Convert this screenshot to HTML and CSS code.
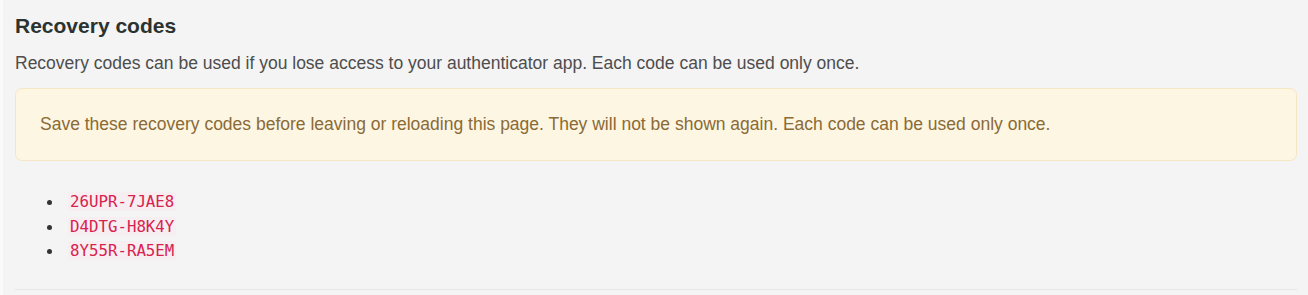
FILE: index.html
```html
<!DOCTYPE html>
<html>
<head>
<meta charset="utf-8">
<link rel="stylesheet" href="styles.css">
</head>
<body>
<section class="panel">
  <h2 class="title">Recovery codes</h2>
  <p class="lead">Recovery codes can be used if you lose access to your authenticator app. Each code can be used only once.</p>
  <div class="alert">Save these recovery codes before leaving or reloading this page. They will not be shown again. Each code can be used only once.</div>
  <ul class="codes">
    <li><code>26UPR-7JAE8</code></li>
    <li><code>D4DTG-H8K4Y</code></li>
    <li><code>8Y55R-RA5EM</code></li>
  </ul>
  <hr class="divider">
</section>
</body>
</html>
```
FILE: styles.css
```css
html, body { margin: 0; padding: 0; }
body {
  background: #fafafa;
  font-family: "Liberation Sans", Arial, sans-serif;
  font-size: 17.5px;
  color: #4a4a4a;
}
.panel {
  margin-left: 3px;
  background: #f4f4f4;
  padding: 14px 11px 0 12px;
  height: 281px;
}
.title {
  margin: 0;
  font-size: 21px;
  line-height: 24px;
  font-weight: bold;
  color: #2b322f;
}
.lead {
  margin: 13px 0 0;
  line-height: 24px;
  color: #4d4d4d;
}
.alert {
  margin-top: 13px;
  background: #fdf6e3;
  border: 1px solid #f6e7c4;
  border-radius: 7px;
  color: #8a6a36;
  padding: 24px 24px;
  line-height: 23px;
}
.codes {
  margin: 28px 0 0;
  padding-left: 49px;
  color: #333;
}
.codes li {
  padding-left: 4px;
  line-height: 24.5px;
}
.codes code {
  font-family: "DejaVu Sans Mono", monospace;
  font-size: 15.75px;
  line-height: 1;
  color: #d9214f;
  background: #f6eef0;
  padding: 0 2px;
}
.divider {
  border: 0;
  border-top: 1px solid #e6e6e6;
  margin: 26px 0 0;
}
```
